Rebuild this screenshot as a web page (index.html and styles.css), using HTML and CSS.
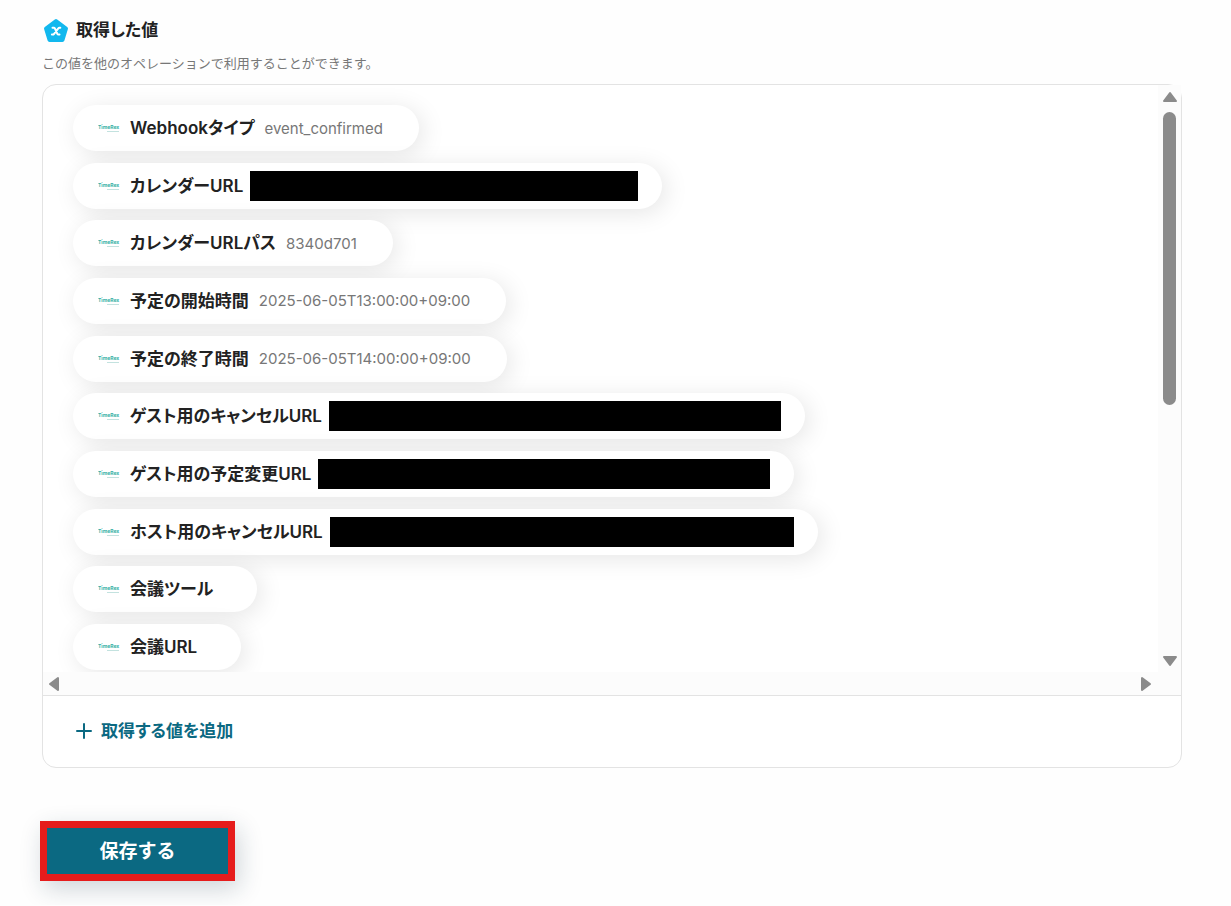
FILE: index.html
```
<!DOCTYPE html>
<html lang="ja">
<head>
  <meta charset="UTF-8">
  <title>取得した値</title>
  <link rel="stylesheet" href="styles.css">
</head>
<body>
  <main class="page">
    <h2 class="title">
      <svg class="title-icon" width="26" height="26" viewBox="0 0 26 26">
        <path d="M13 4 L23 11.500 L19.500 23 H6.500 L3 11.500 Z" fill="#12b8ee" stroke="#12b8ee" stroke-width="4" stroke-linejoin="round"/>
        <path d="M9.500 10.800h1.300c.6 0 .9.300 1.200.9l2.300 5c.3.600.6.900 1.200.9h1M17.300 10.800h-.8c-.6 0-1 .3-1.400.8l-4 5.200c-.4.500-.8.800-1.400.8h-.8" fill="none" stroke="#fff" stroke-width="2" stroke-linecap="round"/>
      </svg>
      <span>取得した値</span>
    </h2>
    <p class="note">この値を他のオペレーションで利用することができます。</p>

    <section class="panel">
      <div class="scroll">
        <ul class="values">
          <li class="pill"><svg class="logo" viewBox="0 0 24 12"><text x="0" y="7">TimeRex</text><path d="M9 9.500h12"/></svg><b>Webhookタイプ</b><span class="value">event_confirmed</span></li>
          <li class="pill masked"><svg class="logo" viewBox="0 0 24 12"><text x="0" y="7">TimeRex</text><path d="M9 9.500h12"/></svg><b>カレンダーURL</b><span class="mask mask-s"></span></li>
          <li class="pill"><svg class="logo" viewBox="0 0 24 12"><text x="0" y="7">TimeRex</text><path d="M9 9.500h12"/></svg><b>カレンダーURLパス</b><span class="value">8340d701</span></li>
          <li class="pill"><svg class="logo" viewBox="0 0 24 12"><text x="0" y="7">TimeRex</text><path d="M9 9.500h12"/></svg><b>予定の開始時間</b><span class="value">2025-06-05T13:00:00+09:00</span></li>
          <li class="pill"><svg class="logo" viewBox="0 0 24 12"><text x="0" y="7">TimeRex</text><path d="M9 9.500h12"/></svg><b>予定の終了時間</b><span class="value">2025-06-05T14:00:00+09:00</span></li>
          <li class="pill masked"><svg class="logo" viewBox="0 0 24 12"><text x="0" y="7">TimeRex</text><path d="M9 9.500h12"/></svg><b>ゲスト用のキャンセルURL</b><span class="mask mask-m"></span></li>
          <li class="pill masked"><svg class="logo" viewBox="0 0 24 12"><text x="0" y="7">TimeRex</text><path d="M9 9.500h12"/></svg><b>ゲスト用の予定変更URL</b><span class="mask mask-m"></span></li>
          <li class="pill masked"><svg class="logo" viewBox="0 0 24 12"><text x="0" y="7">TimeRex</text><path d="M9 9.500h12"/></svg><b>ホスト用のキャンセルURL</b><span class="mask mask-l"></span></li>
          <li class="pill empty"><svg class="logo" viewBox="0 0 24 12"><text x="0" y="7">TimeRex</text><path d="M9 9.500h12"/></svg><b>会議ツール</b></li>
          <li class="pill empty"><svg class="logo" viewBox="0 0 24 12"><text x="0" y="7">TimeRex</text><path d="M9 9.500h12"/></svg><b>会議URL</b></li>
        </ul>
        <div class="bar-v">
          <svg width="16" height="12" viewBox="0 0 16 12"><path d="M8 2 L14 10 H2 Z"/></svg>
          <div class="track"><div class="thumb"></div></div>
          <svg width="16" height="12" viewBox="0 0 16 12"><path d="M8 10 L14 2 H2 Z"/></svg>
        </div>
        <div class="bar-h">
          <svg width="12" height="16" viewBox="0 0 12 16"><path d="M2 8 L10 2 V14 Z"/></svg>
          <svg width="12" height="16" viewBox="0 0 12 16"><path d="M10 8 L2 2 V14 Z"/></svg>
        </div>
      </div>
      <div class="panel-foot">
        <button type="button" class="add">
          <svg width="16" height="16" viewBox="0 0 16 16"><path d="M8 1v14M1 8h14" stroke="currentColor" stroke-width="2" stroke-linecap="round"/></svg>
          <span>取得する値を追加</span>
        </button>
      </div>
    </section>

    <button type="submit" class="save">保存する</button>
  </main>
</body>
</html>
```

FILE: styles.css
```
* {
  box-sizing: border-box;
}

body {
  margin: 0;
  background: #fefefe;
  color: #222;
  font-family: Inter, "Noto Sans CJK JP", sans-serif;
}

button {
  font-family: inherit;
  cursor: pointer;
}

.page {
  padding: 16px 49px 24px 42px;
}

.title,
.pill b,
.add {
  font-size: 17px;
  font-weight: 600;
  font-feature-settings: "palt";
}

.title {
  display: flex;
  align-items: center;
  gap: 7px;
  height: 28px;
  margin: 0;
}

.title span,
.pill b,
.add span {
  padding-bottom: 3px;
}

.title-icon {
  margin-left: 1px;
}

.note {
  margin: 9px 0 11px;
  font-size: 13px;
  line-height: 20px;
  color: #777;
}

.panel {
  border: 1px solid #e3e3e3;
  border-radius: 14px;
  background: #fff;
}

.scroll {
  display: grid;
  grid-template-columns: 1fr 23px;
  grid-template-rows: 587px 23px;
  border-bottom: 1px solid #e3e3e3;
}

.values {
  display: flex;
  flex-direction: column;
  align-items: flex-start;
  justify-content: space-between;
  margin: 0;
  padding: 20px 30px 2px;
  list-style: none;
  overflow: hidden;
  border-top-left-radius: 13px;
}

.pill {
  display: flex;
  align-items: center;
  height: 46px;
  padding: 0 36px 0 25px;
  border-radius: 23px;
  background: #fff;
  box-shadow: 4px 4px 24px rgba(0, 0, 0, 0.1);
  white-space: nowrap;
}

.pill.masked {
  padding-right: 24px;
}

.pill.empty {
  padding-right: 44px;
}

.logo {
  width: 24px;
  height: 12px;
  margin-right: 8px;
}

.logo text {
  font: bold 5px Inter, sans-serif;
  fill: #35b0a5;
}

.logo path {
  stroke: #c3e2df;
}

.value {
  margin-left: 10px;
  font-size: 15px;
  color: #777;
}

.mask {
  height: 30px;
  margin-left: 7px;
  background: #000;
}

.mask-s {
  width: 388px;
}

.mask-m {
  width: 452px;
}

.mask-l {
  width: 464px;
}

.bar-v,
.bar-h {
  display: flex;
  align-items: center;
  justify-content: space-between;
  background: #fcfcfc;
}

.bar-v {
  flex-direction: column;
  padding: 6px 0 5px;
}

.bar-h {
  grid-column: 1 / 3;
  padding: 0 29px 0 5px;
}

.bar-v path,
.bar-h path {
  fill: #8b8b8b;
  stroke: #8b8b8b;
  stroke-width: 2;
  stroke-linejoin: round;
}

.track {
  flex: 1;
  padding: 9px 0;
}

.thumb {
  width: 13px;
  height: 293px;
  border-radius: 7px;
  background: #8b8b8b;
}

.panel-foot {
  padding: 17px 33px 18px;
}

.add {
  display: flex;
  align-items: center;
  gap: 9px;
  height: 36px;
  padding: 0;
  border: 0;
  background: none;
  color: #0b6982;
}

.save {
  display: block;
  width: 195px;
  height: 60px;
  margin: 53px 0 0 -2px;
  padding: 0 0 3px;
  border: 7px solid #e61c1c;
  background: #0b6982;
  box-shadow: 4px 8px 24px rgba(20, 50, 70, 0.2);
  color: #fff;
  font-size: 19px;
  font-weight: 700;
}
```
